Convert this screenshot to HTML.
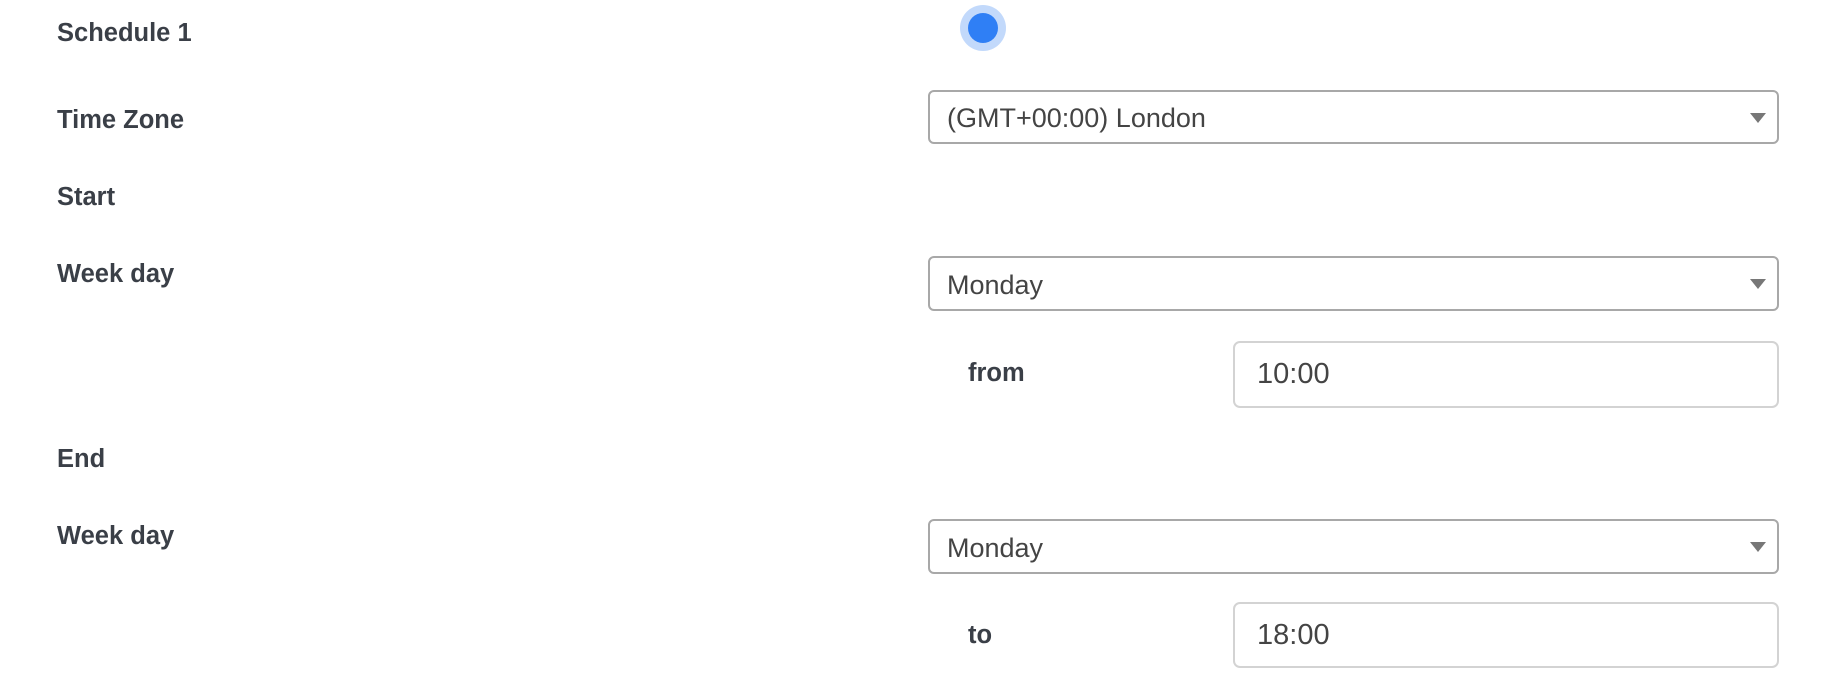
<!DOCTYPE html>
<html><head><meta charset="utf-8"><style>
html,body{margin:0;padding:0;background:#fff;width:1822px;height:680px;overflow:hidden;position:relative;font-family:"Liberation Sans",Arial,sans-serif}
.l{position:absolute;font-weight:bold;font-size:25.5px;color:#3a3f47;line-height:30px;height:30px;white-space:nowrap}
.sel{position:absolute;left:928px;width:851px;height:52px;border:2px solid #a8a8a8;border-radius:6px;box-sizing:border-box;background:#fff}
.sel span{position:absolute;left:17px;top:0;line-height:50px;font-size:27px;color:#444}
.sel i{position:absolute;right:11px;top:21px;width:0;height:0;border-left:8px solid transparent;border-right:8px solid transparent;border-top:10px solid #777}
.inp{position:absolute;left:1233px;width:546px;height:67px;border:2px solid #d3d3d3;border-radius:7px;box-sizing:border-box;background:#fff}
.inp span{position:absolute;left:22px;top:0;line-height:63px;font-size:29px;color:#444}
</style></head><body>
<div class="l" style="left:57px;top:18px">Schedule 1</div>
<div style="position:absolute;left:960px;top:5px;width:46px;height:46px;border-radius:50%;background:#c2d9fb"></div>
<div style="position:absolute;left:968px;top:13px;width:30px;height:30px;border-radius:50%;background:#2f7ff5"></div>
<div class="l" style="left:57px;top:105px">Time Zone</div>
<div class="sel" style="top:90px;height:54px"><span style="line-height:52px">(GMT+00:00) London</span><i></i></div>
<div class="l" style="left:57px;top:182px">Start</div>
<div class="l" style="left:57px;top:259px">Week day</div>
<div class="sel" style="top:256px;height:55px"><span style="line-height:55px">Monday</span><i></i></div>
<div class="l" style="left:968px;top:358px">from</div>
<div class="inp" style="top:341px"><span>10:00</span></div>
<div class="l" style="left:57px;top:444px">End</div>
<div class="l" style="left:57px;top:521px">Week day</div>
<div class="sel" style="top:519px;height:55px"><span style="line-height:55px">Monday</span><i></i></div>
<div class="l" style="left:968px;top:620px">to</div>
<div class="inp" style="top:602px;height:66px"><span>18:00</span></div>
</body></html>
